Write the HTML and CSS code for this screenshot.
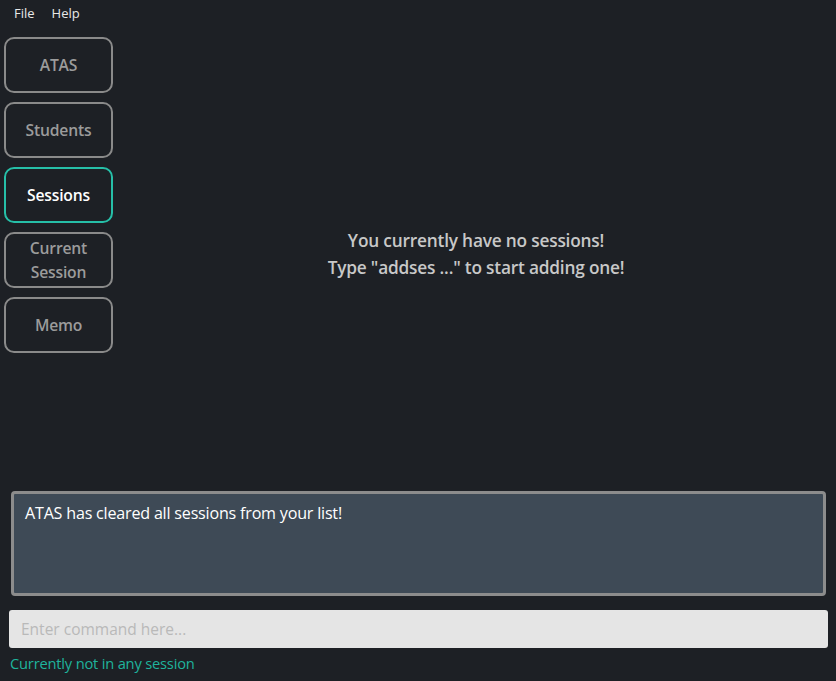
FILE: index.html
```html
<!DOCTYPE html>
<html>
<head>
<meta charset="utf-8">
<link rel="stylesheet" href="styles.css">
</head>
<body>
<div class="app">
  <div class="menubar">
    <span class="menu-item">File</span>
    <span class="menu-item">Help</span>
  </div>
  <div class="main">
    <nav class="sidebar">
      <div class="tab">ATAS</div>
      <div class="tab">Students</div>
      <div class="tab active">Sessions</div>
      <div class="tab">Current<br>Session</div>
      <div class="tab">Memo</div>
    </nav>
    <section class="content">
      <p class="empty">You currently have no sessions!<br>Type "addses ..." to start adding one!</p>
    </section>
  </div>
  <div class="result">ATAS has cleared all sessions from your list!</div>
  <div class="command"><input class="command-input" type="text" placeholder="Enter command here..."></div>
  <div class="status">Currently not in any session</div>
</div>
</body>
</html>
```
FILE: styles.css
```css
html, body {
  margin: 0;
  padding: 0;
  height: 100%;
  background: #1d2025;
  font-family: "Open Sans", "Noto Sans", sans-serif;
}
.app {
  display: flex;
  flex-direction: column;
  height: 681px;
  width: 836px;
}
.menubar {
  display: flex;
  gap: 17px;
  padding: 4px 0 0 14px;
  height: 28px;
  box-sizing: border-box;
}
.menu-item {
  color: #e8e8e8;
  font-size: 13px;
  line-height: 18px;
}
.main {
  display: flex;
  flex: 1;
}
.sidebar {
  display: flex;
  flex-direction: column;
  gap: 9px;
  padding: 9px 0 0 4px;
  width: 109px;
}
.tab {
  height: 56px;
  box-sizing: border-box;
  border: 2px solid #8a8a8a;
  border-radius: 10px;
  display: flex;
  align-items: center;
  justify-content: center;
  text-align: center;
  color: #9b9b9b;
  font-weight: 600;
  font-size: 15.7px;
  line-height: 24px;
  letter-spacing: -0.2px;
}
.tab.active {
  border-color: #26bfa8;
  color: #ffffff;
}
.content {
  flex: 1;
  display: flex;
  justify-content: center;
  padding: 199px 0 0 3px;
}
.empty {
  margin: 0;
  text-align: center;
  color: #c8c8c8;
  font-weight: 600;
  font-size: 17.3px;
  line-height: 27px;
  letter-spacing: -0.2px;
}
.result {
  margin: 0 10px 14px 11px;
  height: 105px;
  box-sizing: border-box;
  border: 3px solid #8c8c8c;
  border-radius: 4px;
  background: #3e4a56;
  color: #ffffff;
  font-size: 16.1px;
  padding: 8px 11px;
  line-height: 22px;
  letter-spacing: -0.2px;
}
.command {
  margin: 0 8px 0 9px;
}
.command-input {
  display: block;
  width: 100%;
  height: 38px;
  box-sizing: border-box;
  border: none;
  border-radius: 3px;
  background: #e5e5e5;
  padding: 0 12px;
  font-family: inherit;
  font-size: 15.5px;
  outline: none;
}
.command-input::placeholder {
  color: #b9b9b9;
}
.status {
  padding: 6px 0 8px 10px;
  color: #1fb39c;
  font-size: 14.7px;
  line-height: 19px;
  letter-spacing: -0.2px;
}
```
